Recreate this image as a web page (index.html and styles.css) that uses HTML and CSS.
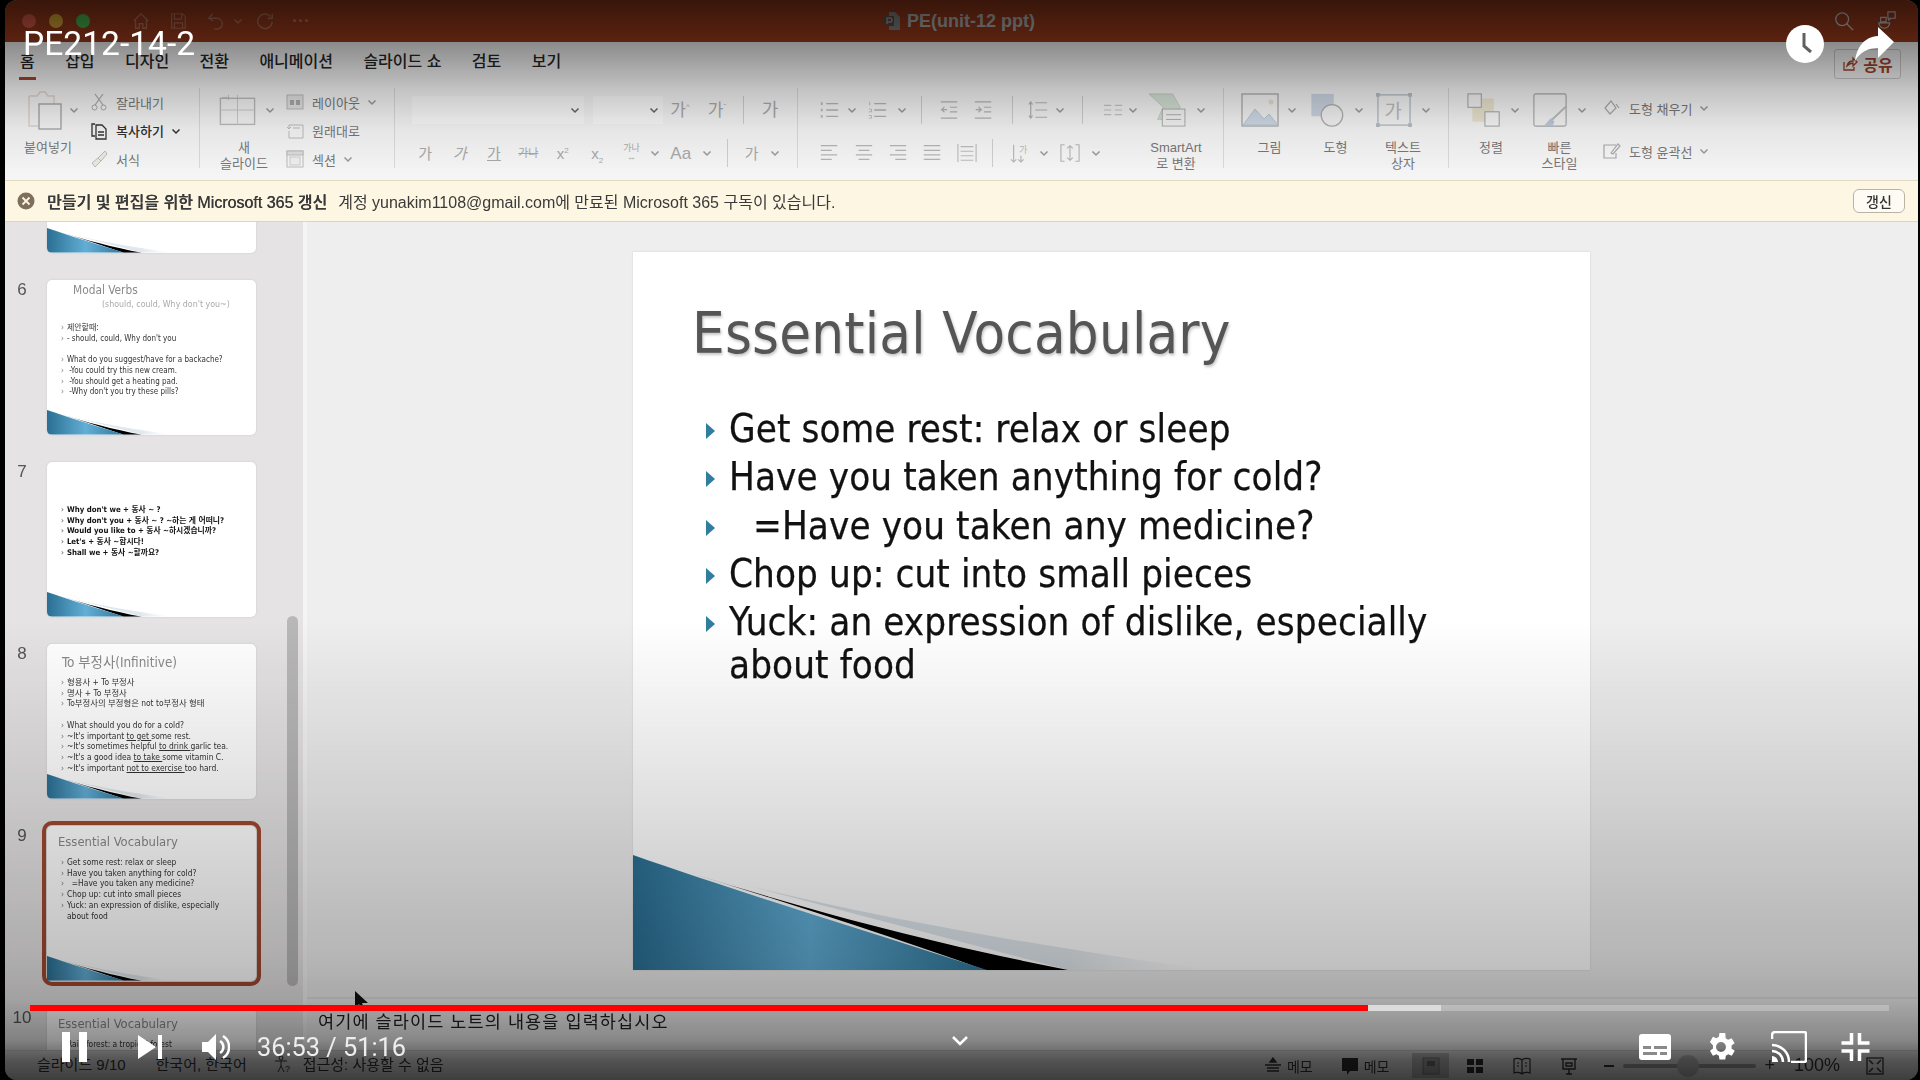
FILE: index.html
```html
<!DOCTYPE html>
<html lang="ko">
<head>
    <meta charset="UTF-8">
    <title>PE212-14-2</title>
    <link rel="stylesheet" href="styles.css">
</head>
<body>
    <svg class="defs" width="0" height="0">
        <symbol id="chev" viewBox="0 0 12 12"><path d="M2.5 4.5 6 8l3.5-3.5" fill="none" stroke="currentColor" stroke-width="1.5"/></symbol>
        <symbol id="swoosh" viewBox="0 0 957 114" preserveAspectRatio="none">
            <defs>
                <linearGradient id="blue" x1="0" x2="1" y1="0" y2="0">
                    <stop offset="0" stop-color="#2b6f93"/>
                    <stop offset=".5" stop-color="#62aed6"/>
                    <stop offset="1" stop-color="#2f7699"/>
                </linearGradient>
                <linearGradient id="fade" x1="0" x2="1" y1="0" y2="0">
                    <stop offset="0" stop-color="#dbe6ee"/>
                    <stop offset=".7" stop-color="#e2e9ee"/>
                    <stop offset="1" stop-color="#f2f2f2" stop-opacity="0"/>
                </linearGradient>
            </defs>
            <path d="M113 30 C270 68 420 92 575 114 H435 Z" fill="url(#fade)"/>
            <path d="M55 17 C180 56 300 88 435 114 H352 C250 78 150 46 55 17Z" fill="#000"/>
            <path d="M0 0 C110 38 240 78 354 114 H0Z" fill="url(#blue)"/>
        </symbol>
    </svg>

    <div class="app">
        <header class="titlebar">
            <div class="title-left">
                <span class="light light-red"></span>
                <span class="light light-yellow"></span>
                <span class="light light-green"></span>
                <svg class="t-icon home" viewBox="0 0 22 22"><path d="M3 11 11 3l8 8M5 10v9h4v-5h4v5h4v-9" fill="none" stroke="currentColor" stroke-width="1.5"/></svg>
                <svg class="t-icon save" viewBox="0 0 22 22"><path d="M4 3h12l3 3v13H4zM7 3v6h8V3M7 19v-6h9v6" fill="none" stroke="currentColor" stroke-width="1.3"/></svg>
                <svg class="t-icon undo" viewBox="0 0 22 22"><path d="M7 3 3 8l5 3M3 8h9a6 6 0 0 1 0 12H9" fill="none" stroke="currentColor" stroke-width="1.5"/></svg>
                <svg class="t-chev"><use href="#chev"/></svg>
                <svg class="t-icon redo" viewBox="0 0 22 22"><path d="M17 6a8 8 0 1 0 2 6M19 3v5h-5" fill="none" stroke="currentColor" stroke-width="1.5"/></svg>
                <span class="t-dots">···</span>
            </div>
            <div class="doc-title">
                <svg class="doc-icon" viewBox="0 0 16 18"><path d="M5 0h6l5 5v13H5z" fill="#8d8d8d"/><rect y="4" width="10" height="10" fill="#6c5048"/><path d="M3 12V6h3a2 2 0 0 1 0 4H3" fill="none" stroke="#aaa" stroke-width="1.4"/></svg>
                <span>PE(unit-12 ppt)</span>
            </div>
            <div class="title-right">
                <svg class="t-icon search" viewBox="0 0 22 22"><circle cx="9" cy="9" r="7" fill="none" stroke="currentColor" stroke-width="1.4"/><path d="m14 14 7 7" stroke="currentColor" stroke-width="1.4"/></svg>
                <svg class="t-icon" viewBox="0 0 22 22"><path d="M12 1h8v7h-5l-2 2V8h-1zM4 7h6v5H6l-2 1zM2 13h12a6 6 0 0 1-12 0z" fill="none" stroke="currentColor" stroke-width="1.3"/></svg>
            </div>
        </header>

        <nav class="tabs">
            <a class="tab active">홈</a>
            <a class="tab">삽입</a>
            <a class="tab">디자인</a>
            <a class="tab">전환</a>
            <a class="tab">애니메이션</a>
            <a class="tab">슬라이드 쇼</a>
            <a class="tab">검토</a>
            <a class="tab">보기</a>
            <a class="share">
                <svg viewBox="0 0 16 16" width="16" height="16"><path d="M2 6v8h10v-3M5 10c1-4 4-5 6-5V2l4 4-4 4V7c-2 0-4 1-6 3z" fill="none" stroke="currentColor" stroke-width="1.3"/></svg>
                공유
            </a>
        </nav>

        <section class="ribbon">
            <div class="group group-clip">
                <div class="big big-paste">
                    <div class="big-icon">
                        <svg class="ic-paste" viewBox="0 0 42 40"><path d="M4 6h8l3-4h5l3 4h6v10M4 6v30h10" fill="none" stroke="#e0d5cb" stroke-width="1.5"/><rect x="14" y="14" width="22" height="25" fill="#f6f6f6" stroke="#a9a9a9" stroke-width="1.4"/></svg>
                        <svg class="chev"><use href="#chev"/></svg>
                    </div>
                    <div class="big-label">붙여넣기</div>
                </div>
                <div class="stack">
                    <div class="stack-row">
                        <svg class="ic-sm" viewBox="0 0 18 18"><path d="m5 1 8 11M13 1 5 12" stroke="#aaa" stroke-width="1.2" fill="none"/><circle cx="4.5" cy="14.5" r="2.5" fill="none" stroke="#aaa"/><circle cx="13.5" cy="14.5" r="2.5" fill="none" stroke="#aaa"/></svg>
                        <span>잘라내기</span>
                    </div>
                    <div class="stack-row strong">
                        <svg class="ic-sm" viewBox="0 0 18 18"><path d="M5 2H2v12h3" fill="none" stroke="#333" stroke-width="1.3"/><path d="M6 3h6l4 4v10H6zM8 10h6M8 13h6" fill="none" stroke="#333" stroke-width="1.3"/></svg>
                        <span>복사하기</span>
                        <svg class="chev"><use href="#chev"/></svg>
                    </div>
                    <div class="stack-row">
                        <svg class="ic-sm" viewBox="0 0 18 18"><path d="M15 1 8 8l3 3 6-7zM8 8l-6 5 3 4 6-6" fill="#ece9e2" stroke="#bbb"/></svg>
                        <span>서식</span>
                    </div>
                </div>
            </div>

            <div class="group group-slide">
                <div class="big big-new">
                    <div class="big-icon">
                        <svg class="ic-new" viewBox="0 0 40 40"><path d="M10 3v6M3 6h8M20 3v32M2 20h36" stroke="#c8c8c8" fill="none"/><rect x="1" y="7" width="38" height="29" fill="none" stroke="#bbb" stroke-width="1.5"/></svg>
                        <svg class="chev"><use href="#chev"/></svg>
                    </div>
                    <div class="big-label">새<br>슬라이드</div>
                </div>
                <div class="stack">
                    <div class="stack-row">
                        <svg class="ic-sm" viewBox="0 0 18 18"><rect x="1" y="2" width="16" height="14" fill="#e4e4e4" stroke="#bbb"/><path d="M4 7h4v5H4zM10 7h4v5h-4z" fill="#aaa"/></svg>
                        <span>레이아웃</span>
                        <svg class="chev"><use href="#chev"/></svg>
                    </div>
                    <div class="stack-row">
                        <svg class="ic-sm" viewBox="0 0 18 18"><path d="M3 6V3h14v13H3V9M1 5l2 2 2-2" fill="none" stroke="#bbb"/><path d="M7 6h7" stroke="#bbb"/></svg>
                        <span>원래대로</span>
                    </div>
                    <div class="stack-row">
                        <svg class="ic-sm" viewBox="0 0 18 18"><rect x="1" y="1" width="16" height="16" fill="none" stroke="#bbb"/><rect x="1" y="1" width="16" height="4" fill="#ddd" stroke="#bbb"/><rect x="4" y="7" width="10" height="8" fill="#eee" stroke="#ccc"/></svg>
                        <span>섹션</span>
                        <svg class="chev"><use href="#chev"/></svg>
                    </div>
                </div>
            </div>

            <div class="group group-font">
                <div class="row font-row1">
                    <div class="select select-font"><svg class="chev"><use href="#chev"/></svg></div>
                    <div class="select select-size"><svg class="chev"><use href="#chev"/></svg></div>
                    <span class="glyph g-up">가<sup>^</sup></span>
                    <span class="glyph g-up">가<sup>ˇ</sup></span>
                    <i class="sep"></i>
                    <span class="glyph g-clear">가</span>
                </div>
                <div class="row font-row2">
                    <span class="glyph">가</span>
                    <span class="glyph italic">가</span>
                    <span class="glyph under">가</span>
                    <span class="glyph strike">가나</span>
                    <span class="glyph">x<sup>2</sup></span>
                    <span class="glyph">x<sub>2</sub></span>
                    <span class="glyph tiny">가나<br>↔</span>
                    <svg class="chev"><use href="#chev"/></svg>
                    <span class="glyph aa">Aa</span>
                    <svg class="chev"><use href="#chev"/></svg>
                    <i class="sep"></i>
                    <span class="glyph">가</span>
                    <svg class="chev"><use href="#chev"/></svg>
                </div>
            </div>

            <div class="group group-para">
                <div class="row para-row1">
                    <svg class="ic-para" viewBox="0 0 22 22"><path d="M8 4h13M8 11h13M8 18h13" stroke="#b5b5b5" stroke-width="1.4"/><path d="M2 4h2M2 11h2M2 18h2" stroke="#b3bcc9" stroke-width="3"/></svg>
                    <svg class="chev"><use href="#chev"/></svg>
                    <svg class="ic-para" viewBox="0 0 22 22"><path d="M8 4h13M8 11h13M8 18h13" stroke="#b5b5b5" stroke-width="1.4"/><path d="M3 2v4M2 10h3v3H2M2 17h3v3H2" stroke="#c0c0c0" fill="none"/></svg>
                    <svg class="chev"><use href="#chev"/></svg>
                    <i class="sep"></i>
                    <svg class="ic-para" viewBox="0 0 22 22"><path d="M2 2h18M12 8h8M12 13h8M2 20h18M9 10.500H3l3-3m-3 3 3 3" stroke="#b5b5b5" fill="none" stroke-width="1.3"/></svg>
                    <svg class="ic-para" viewBox="0 0 22 22"><path d="M2 2h18M12 8h8M12 13h8M2 20h18M3 10.500h6l-3-3m3 3-3 3" stroke="#b5b5b5" fill="none" stroke-width="1.3"/></svg>
                    <i class="sep"></i>
                    <svg class="ic-para" viewBox="0 0 22 22"><path d="M8 3h13M8 11h13M8 19h13M3 2v18M1 5l2-3 2 3M1 17l2 3 2-3" stroke="#b5b5b5" fill="none" stroke-width="1.3"/></svg>
                    <svg class="chev"><use href="#chev"/></svg>
                    <i class="sep"></i>
                    <svg class="ic-para" viewBox="0 0 22 22"><path d="M1 6h8M13 6h8M1 11h8M13 11h8M1 16h8M13 16h8" stroke="#c5c5c5" stroke-width="1.3"/></svg>
                    <svg class="chev"><use href="#chev"/></svg>
                    <svg class="ic-smartart" viewBox="0 0 40 36"><path d="M1 1h25l8 14-8 13H10l6-13z" fill="#d6e2d6" stroke="#c4d2c4"/><rect x="15" y="17" width="24" height="18" fill="#f5f5f5" stroke="#aaa"/><path d="M19 23h16M19 28h16" stroke="#aaa"/></svg>
                    <svg class="chev"><use href="#chev"/></svg>
                </div>
                <div class="row para-row2">
                    <svg class="ic-para" viewBox="0 0 22 22"><path d="M2 3h18M2 8h12M2 13h18M2 18h12" stroke="#b5b5b5" stroke-width="1.4"/></svg>
                    <svg class="ic-para" viewBox="0 0 22 22"><path d="M2 3h18M5 8h12M2 13h18M5 18h12" stroke="#b5b5b5" stroke-width="1.4"/></svg>
                    <svg class="ic-para" viewBox="0 0 22 22"><path d="M2 3h18M8 8h12M2 13h18M8 18h12" stroke="#b5b5b5" stroke-width="1.4"/></svg>
                    <svg class="ic-para" viewBox="0 0 22 22"><path d="M2 3h18M2 8h18M2 13h18M2 18h18" stroke="#b5b5b5" stroke-width="1.4"/></svg>
                    <svg class="ic-para" viewBox="0 0 22 22"><path d="M1 1v20M21 1v20M4 4h14M4 9h14M4 14h14M4 19h14" stroke="#bcbcbc" stroke-width="1.2"/></svg>
                    <i class="sep"></i>
                    <svg class="ic-para" viewBox="0 0 22 22"><path d="M4 2v19M1 18l3 3 3-3M12 14v7M9 18l3 3 3-3" stroke="#b5b5b5" fill="none" stroke-width="1.2"/><text x="10" y="11" font-size="10" fill="#bbb">가</text></svg>
                    <svg class="chev"><use href="#chev"/></svg>
                    <svg class="ic-para" viewBox="0 0 22 22"><path d="M5 2H1v18h4M17 2h4v18h-4M11 3v16M8 6l3-3 3 3M8 16l3 3 3-3" stroke="#b5b5b5" fill="none" stroke-width="1.2"/></svg>
                    <svg class="chev"><use href="#chev"/></svg>
                    <div class="big-label smartart-label">SmartArt<br>로 변환</div>
                </div>
            </div>

            <div class="group group-draw">
                <div class="big big-pic">
                    <div class="big-icon">
                        <svg class="ic-big" viewBox="0 0 38 34"><rect x="1" y="1" width="36" height="32" fill="#f4f4f4" stroke="#b0b0b0" stroke-width="1.4"/><path d="m2 32 12-16 9 10 5-5 9 11z" fill="#cfdbe6" stroke="#b9c8d6"/><circle cx="30" cy="9" r="2.500" fill="#e6dfc8"/></svg>
                        <svg class="chev"><use href="#chev"/></svg>
                    </div>
                    <div class="big-label">그림</div>
                </div>
                <div class="big big-shape">
                    <div class="big-icon">
                        <svg class="ic-big" viewBox="0 0 38 38"><rect x="1" y="1" width="25" height="25" fill="#cdd6e4"/><circle cx="24" cy="25" r="12" fill="#f4f4f4" stroke="#b0b0b0" stroke-width="1.4"/></svg>
                        <svg class="chev"><use href="#chev"/></svg>
                    </div>
                    <div class="big-label">도형</div>
                </div>
                <div class="big big-text">
                    <div class="big-icon">
                        <svg class="ic-big" viewBox="0 0 38 36"><rect x="2" y="2" width="34" height="32" fill="none" stroke="#b5bdc6" stroke-width="1.4"/><path d="M0 0h4v4H0zM34 0h4v4h-4zM0 32h4v4H0zM34 32h4v4h-4z" fill="#b5bdc6"/><text x="9" y="26" font-size="20" fill="#bcbcbc">가</text></svg>
                        <svg class="chev"><use href="#chev"/></svg>
                    </div>
                    <div class="big-label">텍스트<br>상자</div>
                </div>
            </div>

            <div class="group group-style">
                <div class="big big-order">
                    <div class="big-icon">
                        <svg class="ic-big" viewBox="0 0 38 38"><rect x="6" y="6" width="24" height="26" fill="#ebe4d0"/><rect x="1" y="1" width="15" height="15" fill="#f4f4f4" stroke="#aaa" stroke-width="1.2"/><rect x="20" y="21" width="16" height="16" fill="#f8f8f8" stroke="#aaa" stroke-width="1.2"/></svg>
                        <svg class="chev"><use href="#chev"/></svg>
                    </div>
                    <div class="big-label">정렬</div>
                </div>
                <div class="big big-quick">
                    <div class="big-icon">
                        <svg class="ic-big" viewBox="0 0 38 38"><rect x="1" y="1" width="36" height="36" rx="2" fill="none" stroke="#aaa" stroke-width="1.3"/><path d="M37 15 20 31" stroke="#bbb" stroke-width="2"/><path d="m20 28-8 9h10l2-5z" fill="#bccbdf"/></svg>
                        <svg class="chev"><use href="#chev"/></svg>
                    </div>
                    <div class="big-label">빠른<br>스타일</div>
                </div>
                <div class="shape-col">
                    <div class="stack-row">
                        <svg class="ic-sm" viewBox="0 0 18 18"><path d="m2 9 6-7 5 7-6 6zM13 5l3 4" fill="none" stroke="#aaa" stroke-width="1.2"/></svg>
                        <span>도형 채우기</span>
                        <svg class="chev"><use href="#chev"/></svg>
                    </div>
                    <div class="stack-row">
                        <svg class="ic-sm" viewBox="0 0 18 18"><path d="M13 3H1v13h12v-5M8 11l7-9 2 2-7 8z" fill="none" stroke="#aaa" stroke-width="1.2"/></svg>
                        <span>도형 윤곽선</span>
                        <svg class="chev"><use href="#chev"/></svg>
                    </div>
                </div>
            </div>
        </section>

        <div class="notice">
            <svg class="notice-icon" viewBox="0 0 18 18"><circle cx="9" cy="9" r="8.500" fill="#7d6f5b"/><path d="m5.500 5.500 7 7m0-7-7 7" stroke="#fdf6e3" stroke-width="1.800"/></svg>
            <b>만들기 및 편집을 위한 Microsoft 365 갱신</b>
            <span>계정 yunakim1108@gmail.com에 만료된 Microsoft 365 구독이 있습니다.</span>
            <button class="renew">갱신</button>
        </div>

        <main class="workspace">
            <aside class="sidebar">
                <div class="thumbs">
                    <div class="thumb-row">
                        <div class="num"></div>
                        <div class="thumb"><svg class="swoosh"><use href="#swoosh"/></svg></div>
                    </div>
                    <div class="thumb-row">
                        <div class="num">6</div>
                        <div class="thumb">
                            <div class="th-title th-modal">Modal Verbs</div>
                            <div class="th-sub">(should, could, Why don't you~)</div>
                            <ul class="th-list th-list6">
                                <li>제안할때:</li>
                                <li>- should, could, Why don't you</li>
                                <li class="blank"></li>
                                <li>What do you suggest/have for a backache?</li>
                                <li>&nbsp;-You could try this new cream.</li>
                                <li>&nbsp;-You should get a heating pad.</li>
                                <li>&nbsp;-Why don't you try these pills?</li>
                            </ul>
                            <svg class="swoosh"><use href="#swoosh"/></svg>
                        </div>
                    </div>
                    <div class="thumb-row">
                        <div class="num">7</div>
                        <div class="thumb">
                            <ul class="th-list th-list7">
                                <li>Why don't we + 동사 ~ ?</li>
                                <li>Why don't you + 동사 ~ ? ~하는 게 어떠니?</li>
                                <li>Would you like to + 동사 ~하시겠습니까?</li>
                                <li>Let's + 동사 ~합시다!</li>
                                <li>Shall we + 동사 ~할까요?</li>
                            </ul>
                            <svg class="swoosh"><use href="#swoosh"/></svg>
                        </div>
                    </div>
                    <div class="thumb-row">
                        <div class="num">8</div>
                        <div class="thumb">
                            <div class="th-title th-inf">To 부정사(Infinitive)</div>
                            <ul class="th-list th-list8">
                                <li>형용사 + To 부정사</li>
                                <li>명사 + To 부정사</li>
                                <li>To부정사의 부정형은 not to부정사 형태</li>
                                <li class="blank"></li>
                                <li>What should you do for a cold?</li>
                                <li>~It's important <u>to get </u>some rest.</li>
                                <li>~It's sometimes helpful <u>to drink </u>garlic tea.</li>
                                <li>~It's a good idea <u>to take </u>some vitamin C.</li>
                                <li>~It's important <u>not to exercise </u>too hard.</li>
                            </ul>
                            <svg class="swoosh"><use href="#swoosh"/></svg>
                        </div>
                    </div>
                    <div class="thumb-row">
                        <div class="num">9</div>
                        <div class="thumb selected">
                            <div class="th-title th-vocab">Essential Vocabulary</div>
                            <ul class="th-list th-list9">
                                <li>Get some rest: relax or sleep</li>
                                <li>Have you taken anything for cold?</li>
                                <li>&nbsp;&nbsp;=Have you taken any medicine?</li>
                                <li>Chop up: cut into small pieces</li>
                                <li>Yuck: an expression of dislike, especially about food</li>
                            </ul>
                            <svg class="swoosh"><use href="#swoosh"/></svg>
                        </div>
                    </div>
                    <div class="thumb-row">
                        <div class="num">10</div>
                        <div class="thumb">
                            <div class="th-title th-vocab">Essential Vocabulary</div>
                            <ul class="th-list th-list9">
                                <li>Rain forest: a tropical forest</li>
                            </ul>
                        </div>
                    </div>
                </div>
                <div class="scrollbar"></div>
            </aside>

            <div class="editor">
                <div class="stage">
                    <article class="slide">
                        <h1 class="slide-title">Essential Vocabulary</h1>
                        <ul class="slide-list">
                            <li>Get some rest: relax or sleep</li>
                            <li>Have you taken anything for cold?</li>
                            <li><span class="indent">=Have you taken any medicine?</span></li>
                            <li>Chop up: cut into small pieces</li>
                            <li>Yuck: an expression of dislike, especially about food</li>
                        </ul>
                        <svg class="swoosh"><use href="#swoosh"/></svg>
                    </article>
                </div>
                <div class="notes">여기에 슬라이드 노트의 내용을 입력하십시오</div>
            </div>
        </main>

        <footer class="statusbar">
            <span class="st-slide">슬라이드 9/10</span>
            <span class="st-lang">한국어, 한국어</span>
            <svg class="st-acc" viewBox="0 0 18 18"><circle cx="7" cy="3" r="2" fill="none" stroke="#333"/><path d="M1 6h12M7 6v5l-3 6M7 11l3 6" fill="none" stroke="#333"/><text x="11" y="17" font-size="9" fill="#333">?</text></svg>
            <span>접근성: 사용할 수 없음</span>
            <div class="st-right">
                <svg class="st-ic" viewBox="0 0 18 18"><path d="M9 1 6 5h6zM1 8h16M3 11h12M3 14h12" stroke="#333" fill="#333" stroke-width="1.300"/></svg>
                <span class="st-memo">메모</span>
                <svg class="st-ic st-comment" viewBox="0 0 18 18"><path d="M1 1h16v13H9l-3 4v-4H1z" fill="#2d2d2d"/></svg>
                <span class="st-memo">메모</span>
                <div class="view-on"><svg class="st-ic" viewBox="0 0 18 18"><rect x="1" y="1" width="16" height="16" fill="#9b9b9b" stroke="#777"/><rect x="5" y="4" width="8" height="5" fill="#6a6a6a"/></svg></div>
                <svg class="st-ic st-grid" viewBox="0 0 18 18"><path d="M1 2h7v6H1zM10 2h7v6h-7zM1 10h7v6H1zM10 10h7v6h-7z" fill="#2d2d2d"/></svg>
                <svg class="st-ic st-view" viewBox="0 0 18 18"><path d="M9 3C7 1 3 1 1 2v14c2-1 6-1 8 1 2-2 6-2 8-1V2C15 1 11 1 9 3zM9 3v14M4 6h2M4 9h2M12 6h2M12 9h2" fill="none" stroke="#333" stroke-width="1.200"/></svg>
                <svg class="st-ic st-view" viewBox="0 0 18 18"><path d="M1 2h16M3 2v10h12V2M9 12v5M6 17h6M6 6h6v3H6z" fill="none" stroke="#333" stroke-width="1.400"/></svg>
                <i class="zoom-minus"></i>
                <div class="zoom-track"><i class="zoom-knob"></i></div>
                <span class="zoom-plus">+</span>
                <span class="zoom-val">100%</span>
                <svg class="st-ic st-fit" viewBox="0 0 18 18"><rect x="1" y="1" width="16" height="16" fill="none" stroke="#333" stroke-width="1.300"/><path d="m3 3 4 4m8-4-4 4M3 15l4-4m8 4-4-4" stroke="#333" stroke-width="1.500"/></svg>
            </div>
        </footer>
    </div>

    <svg class="cursor" viewBox="0 0 14 22"><path d="M1 1v17l4-4 3 7 3-1-3-7h6z" fill="#111"/></svg>
    <div class="shade-top"></div>
    <div class="shade-bottom"></div>

    <div class="yt-top">
        <div class="yt-title">PE212-14-2</div>
        <div class="yt-actions">
            <svg class="yt-clock" viewBox="0 0 38 38"><circle cx="19" cy="19" r="19" fill="#fff"/><path d="M18 8v13l7 6" fill="none" stroke="#606060" stroke-width="3"/></svg>
            <svg class="yt-share" viewBox="0 0 40 34"><path d="M24 0 40 15 24 31V21C14 21 6 25 1 34 3 20 10 10 24 9z" fill="#fff"/></svg>
        </div>
    </div>

    <div class="yt-bottom">
        <div class="progress">
            <i class="prog-buffer"></i>
            <i class="prog-played"></i>
        </div>
        <div class="controls">
            <div class="ctl-left">
                <svg class="ctl-pause" viewBox="0 0 25 30"><path d="M0 0h8v30H0zM17 0h8v30h-8z" fill="#fff"/></svg>
                <svg class="ctl-next" viewBox="0 0 24 26"><path d="M0 1 18 13 0 25zM20 1h4v24h-4z" fill="#fff"/></svg>
                <svg class="ctl-vol" viewBox="0 0 28 28"><path d="M0 9h6l8-8v26l-8-8H0z" fill="#fff"/><path d="M18 8a7 7 0 0 1 0 12" fill="none" stroke="#fff" stroke-width="2.500"/><path d="M21 3a13 13 0 0 1 0 22" fill="none" stroke="#fff" stroke-width="2.500"/></svg>
                <span class="ctl-time">36:53 / 51:16</span>
            </div>
            <svg class="ctl-more" viewBox="0 0 18 12"><path d="m2 2 7 7 7-7" fill="none" stroke="#fff" stroke-width="2.500"/></svg>
            <div class="ctl-right">
                <svg class="ctl-cc" viewBox="0 0 32 26"><path d="M3 0h26a3 3 0 0 1 3 3v20a3 3 0 0 1-3 3H3a3 3 0 0 1-3-3V3a3 3 0 0 1 3-3z" fill="#fff"/><path d="M4 12h8v3H4zM15 12h13v3H15zM4 18h14v3H4zM21 18h7v3h-7z" fill="#8a8a8a"/></svg>
                <svg class="ctl-gear" viewBox="0 0 24 24"><path d="m19.400 13 .1-1-.1-1 2.200-1.600-2.100-3.600-2.500 1a8 8 0 0 0-1.700-1L15 2.200h-4.100L10.500 4.800a8 8 0 0 0-1.700 1l-2.500-1-2.100 3.600L6.400 11l-.1 1 .1 1-2.200 1.600 2.100 3.600 2.500-1a8 8 0 0 0 1.700 1l.4 2.600H15l.4-2.600a8 8 0 0 0 1.700-1l2.500 1 2.100-3.600zM12 15.500a3.500 3.500 0 1 1 0-7 3.500 3.500 0 0 1 0 7z" fill="#fff"/></svg>
                <svg class="ctl-cast" viewBox="0 0 36 32"><path d="M1 8V4a3 3 0 0 1 3-3h29a2 2 0 0 1 2 2v26a2 2 0 0 1-2 2H20" fill="none" stroke="#fff" stroke-width="2.500"/><path d="M1 14a17 17 0 0 1 17 17M1 20a11 11 0 0 1 11 11" fill="none" stroke="#fff" stroke-width="2.500"/><path d="M1 25a6 6 0 0 1 6 6H1z" fill="#fff"/></svg>
                <svg class="ctl-exit" viewBox="0 0 30 30"><path d="M11 1v10H1M19 1v10h10M11 29V19H1M19 29V19h10" fill="none" stroke="#fff" stroke-width="3.500"/></svg>
            </div>
        </div>
    </div>
</body>
</html>
```

FILE: styles.css
```css
* {
    box-sizing: border-box;
}
html, body {
    margin: 0;
    width: 1920px;
    height: 1080px;
    overflow: hidden;
    background: #000;
}
body {
    position: relative;
    font-family: "Liberation Sans", "Noto Sans CJK KR", sans-serif;
    font-size: 13px;
    color: #777;
}
ul {
    list-style: none;
    margin: 0;
    padding: 0;
}
.defs {
    position: absolute;
}
.chev {
    width: 12px;
    height: 12px;
    color: #9a9a9a;
    flex: none;
}

/* window */
.app {
    display: flex;
    flex-direction: column;
    height: 1080px;
    margin: 0 2px 0 5px;
    border-radius: 12px;
    overflow: hidden;
    background: #f5f5f5;
    filter: blur(0.45px);
}
.titlebar {
    flex: none;
    height: 42px;
    display: grid;
    grid-template-columns: 1fr auto 1fr;
    align-items: center;
    background: #a23e1f;
    color: #b97a62;
    padding: 0 21px 0 17px;
}
.title-left {
    display: flex;
    align-items: center;
}
.light {
    width: 14px;
    height: 14px;
    border-radius: 50%;
    margin-right: 13px;
}
.light-red { background: #e7604f; }
.light-yellow { background: #e9b23b; }
.light-green { background: #4fc452; }
.t-icon {
    width: 20px;
    height: 20px;
    flex: none;
}
.home { margin-left: 28px; }
.save { margin-left: 17px; }
.undo { margin-left: 18px; }
.t-chev {
    width: 12px;
    height: 12px;
    margin-left: 6px;
    color: #b97a62;
}
.redo { margin-left: 11px; }
.t-dots {
    margin-left: 17px;
    font-size: 18px;
    font-weight: bold;
}
.doc-title {
    display: flex;
    align-items: center;
    gap: 7px;
    font-size: 18px;
    font-weight: bold;
    color: #c2c2c2;
}
.doc-icon {
    width: 16px;
    height: 18px;
}
.title-right {
    display: flex;
    justify-content: flex-end;
    gap: 23px;
    color: #d2d2d2;
}

/* tabs */
.tabs {
    flex: none;
    height: 40px;
    display: flex;
    align-items: center;
    padding-bottom: 4px;
    font-size: 16px;
    font-weight: 500;
    color: #262626;
    position: relative;
    padding-left: 15px;
}
.tab {
    margin-right: 30.400px;
    position: relative;
    white-space: nowrap;
}
.tab.active::after {
    content: "";
    position: absolute;
    left: -1px;
    right: -1px;
    bottom: -8px;
    height: 3px;
    background: #a5482a;
}
.share {
    margin-left: auto;
    margin-right: 17px;
    margin-top: 8px;
    width: 67px;
    height: 30px;
    display: flex;
    align-items: center;
    justify-content: center;
    gap: 5px;
    border: 1px solid #c9c9c9;
    border-radius: 3px;
    color: #a0452a;
    font-weight: bold;
}

/* ribbon */
.ribbon {
    flex: none;
    height: 98px;
    display: flex;
    padding-top: 6px;
    background: #f5f5f5;
}
.group {
    height: 80px;
    border-right: 1px solid #dadada;
    display: flex;
}
.group-clip { width: 195px; padding-left: 15px; }
.group-slide { width: 195px; padding-left: 18px; }
.group-font { width: 403px; padding-left: 17px; display: block; }
.group-para { width: 426px; padding-left: 14px; display: block; }
.group-draw { width: 225px; padding-left: 17px; gap: 8px; }
.group-style { width: auto; padding-left: 17px; gap: 10px; border-right: none; }

.big {
    flex: none;
}
.big-icon {
    height: 44px;
    display: flex;
    align-items: center;
    justify-content: flex-start;
    gap: 1px;
}
.big-label {
    margin-top: 8px;
    font-size: 13px;
    line-height: 16px;
    text-align: center;
    color: #777;
    white-space: nowrap;
}
.big-paste { width: 70px; }
.big-paste .big-icon { padding-left: 5px; }
.big-paste .big-label { margin-right: 14px; }
.big-new { width: 68px; }
.big-new .big-label { width: 52px; }
.big-pic { width: 57px; }
.big-shape { width: 59px; }
.big-shape .big-icon { padding-left: 3px; }
.big-text { width: 60px; }
.big-text .big-icon { padding-left: 2px; }
.big-order { width: 55px; }
.big-order .big-label { margin-right: 5px; }
.big-quick { width: 62px; }
.big-quick .big-label { margin-right: 5px; }
.ic-paste { width: 42px; height: 40px; }
.ic-new { width: 39px; height: 36px; margin-right: 6px; }
.ic-big { width: 38px; height: 34px; margin-right: 6px; }
.stack {
    display: flex;
    flex-direction: column;
}
.stack-row {
    flex: none;
    height: 28.500px;
    display: flex;
    align-items: center;
    gap: 8px;
    white-space: nowrap;
}
.stack-row .chev { margin-left: -2px; }
.strong {
    color: #303030;
    font-weight: 500;
}
.strong .chev { color: #333; }
.ic-sm {
    width: 18px;
    height: 18px;
    flex: none;
}
.shape-col {
    display: flex;
    flex-direction: column;
    gap: 14.500px;
    padding-top: 6px;
}

.row {
    display: grid;
    align-items: center;
    justify-items: center;
}
.font-row1 {
    height: 44px;
    grid-template-columns: 174px 77px 34px 40px 12px 42px;
}
.font-row2 {
    height: 42px;
    grid-template-columns: repeat(7, 34.400px) 12px 40px 12px 29px 20px 26px;
    margin-left: -4px;
}
.select {
    height: 28px;
    background: #fbfbfb;
    display: flex;
    align-items: center;
    justify-content: flex-end;
    padding-right: 3px;
    justify-self: start;
}
.select .chev { color: #666; }
.select-font { width: 172px; }
.select-size { width: 70px; margin-left: 7px; }
.glyph {
    font-size: 15px;
    color: #a9a9a9;
    white-space: nowrap;
    line-height: 1;
}
.glyph sup, .glyph sub {
    font-size: 8px;
    line-height: 0;
}
.g-up { font-size: 17px; }
.g-clear { font-size: 18px; }
.italic { font-style: italic; }
.under { text-decoration: underline; }
.strike {
    text-decoration: line-through;
    font-size: 11px;
}
.tiny {
    font-size: 9px;
    line-height: 9px;
    text-align: center;
}
.aa { font-size: 17px; }
.sep {
    width: 1px;
    height: 28px;
    background: #cfcfcf;
}
.para-row1 {
    height: 44px;
    grid-template-columns: 34px 12px 38px 12px 27px 28px 40px 19px 32px 12px 32px 29px 12px 56px 12px;
}
.para-row2 {
    height: 42px;
    grid-template-columns: repeat(5, 34.400px) 18px 36px 12px 40px 12px 120px;
}
.ic-para { width: 20px; height: 20px; }
.ic-smartart { width: 38px; height: 34px; }
.smartart-label {
    margin: 6px 0 0 28px;
}

/* notice */
.notice {
    flex: none;
    height: 42px;
    display: flex;
    align-items: center;
    padding-left: 12px;
    background: #fdf6e3;
    border-top: 1px solid #e2d9c2;
    border-bottom: 1px solid #dcd5c2;
    font-size: 16px;
    color: #3a3a3a;
}
.notice-icon {
    width: 18px;
    height: 18px;
    margin-right: 12px;
}
.notice b {
    font-weight: 500;
    margin-right: 11px;
    text-shadow: 0.3px 0 0 #3a3a3a;
}
.renew {
    margin-left: auto;
    margin-right: 13px;
    width: 52px;
    height: 24px;
    padding: 0;
    background: #fdfbf4;
    border: 1px solid #b9b3a3;
    border-radius: 6px;
    font: 500 14px "Liberation Sans", "Noto Sans CJK KR", sans-serif;
    color: #333;
}

/* workspace */
.workspace {
    flex: 1;
    display: flex;
    min-height: 0;
    background: #efeeef;
}
.sidebar {
    width: 302px;
    flex: none;
    position: relative;
    overflow: hidden;
    background: #e5e3e3;
    border-right: 4px solid #f4f4f4;
}
.thumbs {
    margin-top: -124px;
}
.thumb-row {
    display: flex;
    height: 155px;
    margin-bottom: 27px;
}
.num {
    width: 34px;
    margin-right: 8px;
    font-size: 17px;
    line-height: 20px;
    text-align: center;
    color: #555;
}
.thumb {
    width: 209px;
    height: 155px;
    position: relative;
    overflow: hidden;
    background: #fff;
    border-radius: 5px;
    box-shadow: 0 0 2px #c4c4c4;
    font-family: "DejaVu Sans", "Noto Sans CJK KR", sans-serif;
    font-stretch: condensed;
    color: #333;
}
.thumb.selected {
    overflow: visible;
    outline: 4px solid #a0492f;
    outline-offset: 1px;
}
.swoosh {
    position: absolute;
    left: 0;
    bottom: 0;
    width: 100%;
    height: 16%;
    overflow: hidden;
}
.th-title {
    color: #8a8a8a;
    white-space: nowrap;
}
.th-modal {
    font-size: 11.800px;
    padding: 3px 0 0 26px;
}
.th-sub {
    font-size: 8.800px;
    color: #aaa;
    padding: 2px 0 0 55px;
}
.th-inf {
    font-size: 13.400px;
    padding: 7px 0 0 15px;
}
.th-vocab {
    font-size: 12.900px;
    padding: 8px 0 0 11px;
}
.th-list {
    font-size: 8.400px;
    line-height: 10.700px;
    padding-left: 20px;
    padding-right: 22px;
}
.th-list li {
    white-space: nowrap;
}
.th-list li::before {
    content: "›";
    color: #777;
    margin-left: -6px;
    margin-right: 3px;
}
.th-list li.blank {
    height: 10.700px;
}
.th-list li.blank::before {
    content: none;
}
.th-list6 {
    padding-top: 14px;
    font-size: 8px;
}
.th-list7 {
    padding-top: 43px;
    font-size: 7.800px;
    font-weight: bold;
    color: #111;
}
.th-list8 { padding-top: 6px; }
.th-list9 { padding-top: 8px; }
.th-list9 li { white-space: normal; }
.scrollbar {
    position: absolute;
    left: 282px;
    top: 394px;
    width: 11px;
    height: 370px;
    border-radius: 6px;
    background: #b8b8b8;
}

/* editor */
.editor {
    flex: 1;
    display: flex;
    flex-direction: column;
    min-width: 0;
}
.stage {
    flex: none;
    height: 777px;
    border-bottom: 2px solid #e2e2e2;
    padding: 30px 0 0 326px;
}
.slide {
    width: 957px;
    height: 718px;
    position: relative;
    background: #fff;
    box-shadow: 0 0 2px #cfcfcf;
    padding: 45px 0 0 59px;
    font-family: "DejaVu Sans", "Noto Sans CJK KR", sans-serif;
    font-stretch: condensed;
    color: #111;
}
.slide-title {
    margin: 0;
    font-size: 57.500px;
    line-height: 74px;
    font-weight: normal;
    letter-spacing: 0.2px;
    color: #555;
    text-shadow: 1px 2px 3px #c4c4c4;
}
.slide-list {
    margin-top: 37px;
    margin-left: 37px;
    width: 790px;
    font-size: 38.200px;
    line-height: 43px;
    letter-spacing: 0.1px;
    -webkit-text-stroke: 0.25px #111;
}
.slide-list li {
    position: relative;
    margin-bottom: 5.300px;
}
.slide-list li::before {
    content: "";
    position: absolute;
    left: -23px;
    top: 15px;
    border-left: 9px solid #2f7ea1;
    border-top: 8px solid transparent;
    border-bottom: 8px solid transparent;
}
.indent {
    margin-left: 24px;
}
.notes {
    padding: 9px 0 0 11px;
    font-size: 17.500px;
    letter-spacing: 1.100px;
    color: #222;
}

/* status bar */
.statusbar {
    flex: none;
    height: 30px;
    display: flex;
    align-items: center;
    padding: 0 0 4px 32px;
    background: #dcdcdc;
    border-top: 1px solid #c9c9c9;
    font-size: 15px;
    color: #333;
    position: relative;
}
.st-lang { margin-left: 30px; }
.st-acc {
    width: 18px;
    height: 18px;
    margin: 0 11px 0 27px;
}
.st-right {
    margin-left: auto;
    margin-right: 34px;
    margin-bottom: -4px;
    display: flex;
    align-items: center;
    height: 100%;
}
.st-ic {
    width: 18px;
    height: 18px;
    flex: none;
}
.st-memo { margin-left: 5px; font-size: 14px; }
.st-comment { margin-left: 28px; }
.view-on {
    width: 37px;
    height: 100%;
    margin-left: 23px;
    display: flex;
    align-items: center;
    justify-content: center;
    background: #b2b2b2;
}
.st-grid { margin-left: 17px; }
.st-view { margin-left: 29px; }
.zoom-minus {
    width: 10px;
    height: 2px;
    margin-left: 26px;
    background: #333;
}
.zoom-track {
    width: 133px;
    height: 4px;
    margin-left: 9px;
    border-radius: 2px;
    background: #999;
    position: relative;
}
.zoom-knob {
    position: absolute;
    left: 54px;
    top: -9px;
    width: 22px;
    height: 22px;
    border-radius: 50%;
    background: #b5b5b5;
}
.zoom-plus {
    margin-left: 8px;
    font-size: 18px;
}
.zoom-val {
    margin-left: 19px;
    font-size: 18px;
}
.st-fit { margin-left: 26px; }

/* mouse pointer over the video */
.cursor {
    position: absolute;
    left: 354px;
    top: 990px;
    width: 14px;
    height: 22px;
}

/* video player overlay */
.shade-top {
    position: absolute;
    left: 0;
    right: 0;
    top: 0;
    height: 175px;
    background: linear-gradient(to bottom, rgba(0,0,0,.65) 0, rgba(0,0,0,.42) 45px, rgba(0,0,0,.2) 90px, rgba(0,0,0,.06) 130px, rgba(0,0,0,0) 175px);
}
.shade-bottom {
    position: absolute;
    left: 0;
    right: 0;
    bottom: 0;
    height: 460px;
    background: linear-gradient(to bottom, rgba(0,0,0,0) 0, rgba(0,0,0,.12) 180px, rgba(0,0,0,.24) 340px, rgba(0,0,0,.29) 380px, rgba(0,0,0,.43) 420px, rgba(0,0,0,.62) 440px, rgba(0,0,0,.72) 460px);
}
.yt-top {
    position: absolute;
    left: 23px;
    right: 26px;
    top: 24px;
    display: flex;
    justify-content: space-between;
    align-items: flex-start;
}
.yt-title {
    font-family: Roboto, sans-serif;
    font-size: 33.600px;
    line-height: 40px;
    color: #fff;
}
.yt-actions {
    display: flex;
    gap: 30px;
    margin-top: 1px;
}
.yt-clock {
    width: 38px;
    height: 38px;
}
.yt-share {
    width: 40px;
    height: 34px;
    margin-top: 2px;
}
.yt-bottom {
    position: absolute;
    left: 0;
    right: 0;
    bottom: 0;
    height: 75px;
}
.progress {
    position: relative;
    margin: 0 31px 0 30px;
    height: 6px;
    background: rgba(255,255,255,.25);
}
.prog-buffer, .prog-played {
    position: absolute;
    left: 0;
    top: 0;
    height: 100%;
}
.prog-buffer {
    width: 1411px;
    background: #dcdcdc;
}
.prog-played {
    width: 1338px;
    background: #f00;
}
.controls {
    height: 60px;
    margin-top: 6px;
    display: grid;
    grid-template-columns: 1fr auto 1fr;
    align-items: center;
    padding: 0 49px 0 62px;
}
.ctl-left, .ctl-right {
    display: flex;
    align-items: center;
}
.ctl-right {
    justify-content: flex-end;
}
.ctl-pause { width: 25px; height: 30px; }
.ctl-next { width: 24px; height: 26px; margin-left: 51px; }
.ctl-vol { width: 28px; height: 28px; margin-left: 40px; }
.ctl-time {
    margin-left: 27px;
    font-family: Roboto, sans-serif;
    font-size: 25.300px;
    color: #eee;
}
.ctl-more { width: 18px; height: 12px; margin: 0 13px 12px 0; }
.ctl-cc { width: 32px; height: 26px; }
.ctl-gear { width: 34px; height: 34px; margin-left: 33px; }
.ctl-cast { width: 36px; height: 32px; margin-left: 33px; }
.ctl-exit { width: 31px; height: 30px; margin-left: 33px; }
```
